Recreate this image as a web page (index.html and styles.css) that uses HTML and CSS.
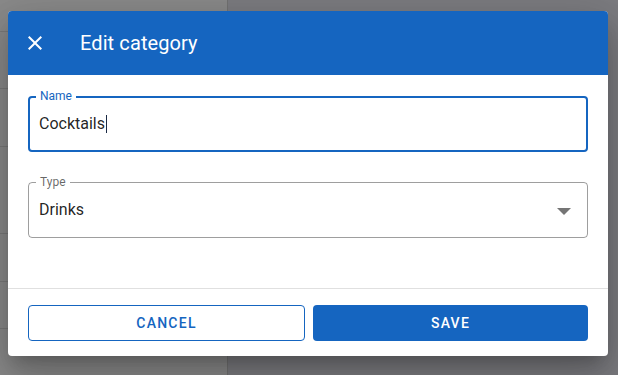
FILE: index.html
```html
<!DOCTYPE html>
<html>
<head>
<meta charset="utf-8">
<link rel="stylesheet" href="styles.css">
</head>
<body>
<div class="page">
  <aside class="sidebar">
    <div class="row r1"></div>
    <div class="row r2"></div>
    <div class="row r3"></div>
    <div class="row r4"></div>
    <div class="row r5"></div>
    <div class="row r6"></div>
  </aside>
  <main class="main"></main>
</div>
<div class="backdrop"></div>
<div class="dialog">
  <header class="dialog-header">
    <svg class="close-icon" viewBox="0 0 24 24" width="24" height="24"><path fill="#fff" d="M19 6.41L17.59 5 12 10.59 6.41 5 5 6.41 10.59 12 5 17.59 6.41 19 12 13.41 17.59 19 19 17.59 13.41 12z"/></svg>
    <h1 class="dialog-title">Edit category</h1>
  </header>
  <section class="dialog-body">
    <div class="field focused">
      <span class="field-label">Name</span>
      <div class="field-value">Cocktails<span class="caret"></span></div>
    </div>
    <div class="field select">
      <span class="field-label">Type</span>
      <div class="field-value">Drinks</div>
      <svg class="arrow" viewBox="0 0 14 7" width="14" height="7"><polygon points="0,0 14,0 7,7" fill="#757575"/></svg>
    </div>
  </section>
  <footer class="dialog-footer">
    <button class="btn btn-outlined">CANCEL</button>
    <button class="btn btn-contained">SAVE</button>
  </footer>
</div>
</body>
</html>
```
FILE: styles.css
```css
* { box-sizing: border-box; }
html, body { margin: 0; padding: 0; }
body {
  width: 618px;
  height: 375px;
  overflow: hidden;
  font-family: Roboto, "Liberation Sans", sans-serif;
  position: relative;
}
.page {
  display: flex;
  height: 375px;
}
.sidebar {
  width: 228px;
  background: #fff;
  border-right: 1px solid #d2d2d2;
  display: flex;
  flex-direction: column;
}
.row { border-bottom: 1px solid #e2e2e2; }
.r1 { height: 32px; }
.r2 { height: 57px; }
.r3 { height: 58px; }
.r4 { height: 87px; }
.r5 { height: 48px; }
.r6 { height: 47px; }
.main {
  flex: 1;
  background: #e6e6ec;
}
.backdrop {
  position: absolute;
  inset: 0;
  background: rgba(0, 0, 0, 0.46);
}
.dialog {
  position: absolute;
  left: 8px;
  top: 11px;
  width: 600px;
  height: 345px;
  background: #fff;
  border-radius: 4px;
  display: flex;
  flex-direction: column;
  box-shadow: 0 11px 15px -7px rgba(0,0,0,.2), 0 24px 38px 3px rgba(0,0,0,.14), 0 9px 46px 8px rgba(0,0,0,.12);
}
.dialog-header {
  height: 64px;
  flex: none;
  background: #1565c0;
  border-radius: 4px 4px 0 0;
  display: flex;
  align-items: center;
  padding-left: 15px;
}
.close-icon { display: block; margin-top: 0; }
.dialog-title {
  margin: 0 0 0 33px;
  font-size: 20px;
  font-weight: 400;
  color: #fff;
  letter-spacing: 0.1px;
}
.dialog-body {
  flex: 1;
  padding: 21px 20px 0;
  display: flex;
  flex-direction: column;
  gap: 30px;
  border-bottom: 1px solid #e0e0e0;
}
.field {
  position: relative;
  height: 56px;
  border: 1px solid rgba(0,0,0,.38);
  border-radius: 4px;
  padding: 0 10px;
  display: flex;
  align-items: center;
}
.field.focused {
  border: 2px solid #1565c0;
  padding: 0 9px;
}
.field-value {
  font-size: 16px;
  line-height: 23px;
  color: rgba(0,0,0,.87);
  display: flex;
  align-items: center;
  margin-top: -1px;
}
.caret {
  display: inline-block;
  width: 1px;
  height: 18px;
  background: #1a2a44;
  margin-left: 1px;
}
.field-label {
  position: absolute;
  top: -7px;
  left: 7px;
  padding: 0 4px;
  background: #fff;
  font-size: 12px;
  line-height: 12px;
  color: rgba(0,0,0,.6);
}
.field.focused .field-label {
  top: -8px;
  left: 6px;
  color: #1565c0;
}
.select .arrow {
  position: absolute;
  right: 16px;
  top: 25px;
}
.dialog-footer {
  height: 67px;
  flex: none;
  padding: 16px 20px 15px;
  display: flex;
  gap: 8px;
}
.btn {
  flex: 1;
  height: 36px;
  border-radius: 4px;
  font-family: Roboto, "Liberation Sans", sans-serif;
  font-size: 14px;
  font-weight: 500;
  letter-spacing: 1.25px;
  cursor: pointer;
}
.btn-outlined {
  background: #fff;
  color: #1565c0;
  border: 1px solid #1565c0;
}
.btn-contained {
  background: #1565c0;
  color: #fff;
  border: none;
}
```
